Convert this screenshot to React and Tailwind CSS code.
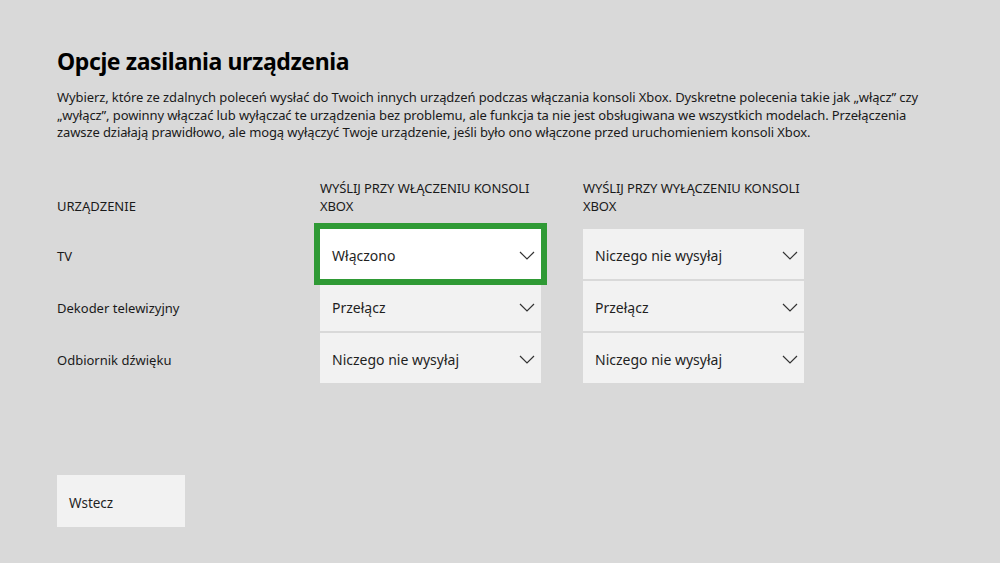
import React from 'react'

const rows = [
  { name: 'TV', on: 'Włączono', off: 'Niczego nie wysyłaj' },
  { name: 'Dekoder telewizyjny', on: 'Przełącz', off: 'Przełącz' },
  { name: 'Odbiornik dźwięku', on: 'Niczego nie wysyłaj', off: 'Niczego nie wysyłaj' },
]

function Chevron() {
  return (
    <svg width="16" height="9" viewBox="0 0 16 9" fill="none" className="shrink-0">
      <path d="M1 1l7 7 7-7" stroke="#333" strokeWidth="1.2" />
    </svg>
  )
}

function Dropdown({ label, focused }) {
  return (
    <div
      className={`relative flex h-[50px] items-center justify-between pl-3 pr-[6px] pt-[3px] text-[14px] text-[#1f1f1f] ${
        focused ? 'z-10 bg-white outline-[6px] outline-solid outline-[#2f9a35]' : 'bg-[#f2f2f2]'
      }`}
    >
      <span>{label}</span>
      <Chevron />
    </div>
  )
}

export default function App() {
  return (
    <div
      className="flex h-[563px] w-[1000px] flex-col bg-[#d9d9d9] pl-[57px] pt-[44px] text-[#1a1a1a]"
      style={{ fontFamily: '"Noto Sans", "Open Sans", sans-serif' }}
    >
      <h1 className="text-[23px] font-bold leading-[34px] tracking-[-0.4px] text-black">Opcje zasilania urządzenia</h1>
      <p className="mt-[11px] w-[880px] text-[13px] leading-[17.5px] tracking-[-0.1px]">
        Wybierz, które ze zdalnych poleceń wysłać do Twoich innych urządzeń podczas włączania konsoli Xbox. Dyskretne
        polecenia takie jak „włącz” czy „wyłącz”, powinny włączać lub wyłączać te urządzenia bez problemu, ale funkcja
        ta nie jest obsługiwana we wszystkich modelach. Przełączenia zawsze działają prawidłowo, ale mogą wyłączyć Twoje
        urządzenie, jeśli było ono włączone przed uruchomieniem konsoli Xbox.
      </p>

      <div className="mt-[37px] grid grid-cols-[263px_221px_221px] gap-y-[2px] text-[13px]">
        <div className="flex items-end pb-[2px] uppercase leading-[18px]">Urządzenie</div>
        <div className="w-[240px] pb-[2px] uppercase leading-[18px] tracking-[-0.1px]">
          Wyślij przy włączeniu konsoli Xbox
        </div>
        <div className="ml-[42px] w-[240px] pb-[2px] uppercase leading-[18px] tracking-[-0.1px]">
          Wyślij przy wyłączeniu konsoli Xbox
        </div>

        {rows.map((r, i) => (
          <React.Fragment key={r.name}>
            <div className={`flex h-[50px] items-center pt-[6px] ${i === 0 ? 'mt-[10px]' : ''}`}>{r.name}</div>
            <div className={i === 0 ? 'mt-[10px]' : ''}>
              <Dropdown label={r.on} focused={i === 0} />
            </div>
            <div className={`ml-[42px] w-[221px] ${i === 0 ? 'mt-[10px]' : ''}`}>
              <Dropdown label={r.off} />
            </div>
          </React.Fragment>
        ))}
      </div>

      <button className="mt-[92px] flex h-[52px] w-[128px] items-center bg-[#f2f2f2] pl-3 pt-[5px] text-left text-[13.5px] text-[#1f1f1f]">
        Wstecz
      </button>
    </div>
  )
}
